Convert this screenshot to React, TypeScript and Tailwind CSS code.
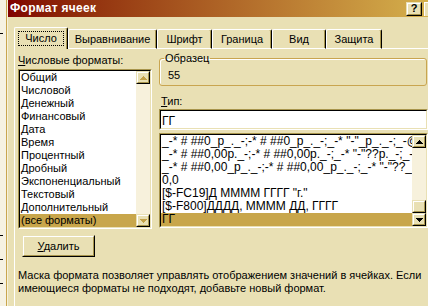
import React from "react";

const leftItems = [
  "Общий",
  "Числовой",
  "Денежный",
  "Финансовый",
  "Дата",
  "Время",
  "Процентный",
  "Дробный",
  "Экспоненциальный",
  "Текстовый",
  "Дополнительный",
  "(все форматы)",
];

const typeItems = [
  '_-* # ##0_р_._-;-* # ##0_р_._-;_-* "-"_р_._-;_-@_-',
  '_-* # ##0,00р._-;-* # ##0,00р._-;_-* "-"??р._-;_-@_-',
  '_-* # ##0,00_р_._-;-* # ##0,00_р_._-;_-* "-"??_р_._-;_-@_-',
  "0,0",
  '[$-FC19]Д ММММ ГГГГ "г."',
  "[$-F800]ДДДД, ММММ ДД, ГГГГ",
  "ГГ",
];

function Raised({ className = "", children }: { className?: string; children?: React.ReactNode }) {
  return (
    <div className={`border border-t-[#e9e0b4] border-l-[#e9e0b4] border-r-black border-b-black ${className}`}>
      <div className="w-full h-full border border-t-white border-l-white border-r-[#a8954c] border-b-[#a8954c] bg-[#e9e0b4] flex items-center justify-center">
        {children}
      </div>
    </div>
  );
}

function Sunken({ className = "", children }: { className?: string; children?: React.ReactNode }) {
  return (
    <div className={`border border-t-[#a8954c] border-l-[#a8954c] border-r-white border-b-white ${className}`}>
      <div className="w-full h-full border border-t-black border-l-black border-r-[#e9e0b4] border-b-[#e9e0b4] bg-white overflow-hidden">
        {children}
      </div>
    </div>
  );
}

function Arrow({ up, color }: { up?: boolean; color: string }) {
  const rows = up ? [0, 1, 2, 3] : [3, 2, 1, 0];
  return (
    <svg width="7" height="4" viewBox="0 0 7 4" shapeRendering="crispEdges">
      {rows.map((r, i) => (
        <rect key={i} x={3 - r} y={i} width={r * 2 + 1} height={1} fill={color} />
      ))}
    </svg>
  );
}

function Tab({ label, w, selected }: { label: string; w: string; selected?: boolean }) {
  if (selected) {
    return (
      <div
        className={`${w} h-[22px] shrink-0 border-l border-t border-white border-r border-r-black rounded-tl-[2px] rounded-tr-[2px] shadow-[inset_-1px_0_0_#a8954c] flex items-center justify-center bg-[#e9e0b4]`}
      >
        <span className="border border-dotted border-black px-[6px] leading-[13px]">{label}</span>
      </div>
    );
  }
  return (
    <div
      className={`${w} h-[20px] shrink-0 border-l border-t border-b border-white border-r border-r-black rounded-tl-[2px] rounded-tr-[2px] shadow-[inset_-1px_0_0_#a8954c] flex items-center justify-center`}
    >
      {label}
    </div>
  );
}

export default function App() {
  return (
    <div className="w-[428px] h-[306px] overflow-hidden flex font-['Liberation_Sans',Arial,sans-serif] text-[11px] leading-[13px] text-black bg-[#e9e0b4]">
      {/* background sheet strip */}
      <div className="relative w-[6px] shrink-0 bg-[#f6f2e2]">
        <div className="absolute left-0 top-[33px] w-[3px] h-px bg-black" />
        <div className="absolute left-0 top-[235px] w-[3px] h-px bg-black" />
        <div className="absolute left-0 top-[259px] w-[3px] h-px bg-black" />
        <div className="absolute left-0 top-[283px] w-[3px] h-px bg-black" />
      </div>
      <div className="w-px shrink-0 bg-[#c9a64e]" />
      <div className="flex-1 min-w-0 flex flex-col border-l border-[#f7f2dc] bg-[#e9e0b4]">
        {/* title bar */}
        <div className="h-[17px] shrink-0 flex items-center bg-gradient-to-r from-[#800000] to-[#d4b04c] pl-[2px]">
          <span className="text-white font-bold text-[12px] leading-[17px] tracking-[0.3px] whitespace-nowrap">Формат ячеек</span>
          <div className="flex-1" />
          <Raised className="w-[16px] h-[14px]">
            <span className="font-bold text-[11px] leading-[11px]">?</span>
          </Raised>
          <div className="ml-[2px] w-[4px] h-[14px] border-l border-t border-white bg-[#e9e0b4]" />
        </div>

        {/* tabs */}
        <div className="h-[32px] shrink-0 flex items-end pl-[6px]">
          <Tab label="Число" w="w-[54px]" selected />
          <Tab label="Выравнивание" w="w-[89px]" />
          <Tab label="Шрифт" w="w-[55px]" />
          <Tab label="Граница" w="w-[60px]" />
          <Tab label="Вид" w="w-[54px]" />
          <Tab label="Защита" w="w-[56px]" />
          <div className="flex-1 h-px bg-white" />
        </div>

        {/* panel */}
        <div className="ml-[6px] flex-1 border-l border-white pl-[3px] pt-[3px] flex flex-col">
          <div className="flex gap-[7px]">
            {/* left column */}
            <div className="w-[134px] shrink-0 pt-[2px] flex flex-col">
              <div className="whitespace-nowrap">
                <span className="underline">Ч</span>исловые форматы:
              </div>
              <Sunken className="mt-[2px] w-[134px] h-[160px]">
                <div className="flex h-full">
                  <div className="flex-1 min-w-0">
                    {leftItems.map((t, i) => (
                      <div
                        key={t}
                        className={`h-[13px] pl-[1px] whitespace-nowrap ${i === leftItems.length - 1 ? "bg-[#c8a64b]" : ""}`}
                      >
                        {t}
                      </div>
                    ))}
                  </div>
                  <div className="w-[14px] shrink-0 flex flex-col bg-[#f7f1dc]">
                    <Raised className="h-[13px]">
                      <Arrow up color="#c4a24a" />
                    </Raised>
                    <div className="flex-1" />
                    <Raised className="h-[13px]">
                      <Arrow color="#c4a24a" />
                    </Raised>
                  </div>
                </div>
              </Sunken>
              <Raised className="ml-[4px] mt-[6px] w-[73px] h-[22px]">
                <span>
                  <span className="underline">У</span>далить
                </span>
              </Raised>
            </div>

            {/* right column */}
            <div className="flex-1 min-w-0 flex flex-col">
              <fieldset className="mr-px border border-[#c9a550] rounded-[3px] shadow-[inset_1px_1px_0_#fff] pl-[4px] pb-[3px]">
                <legend className="px-[1px] leading-[13px]">Образец</legend>
                <div className="pl-[4px] pt-[4px]">55</div>
              </fieldset>
              <div className="mt-[9px] pl-[2px]">
                <span className="underline">Т</span>ип:
              </div>
              <Sunken className="mt-px h-[21px]">
                <div className="pl-[1px] pt-[4px] text-[12px] leading-[13px] whitespace-nowrap">ГГ</div>
              </Sunken>
              <Sunken className="mt-[3px] h-[95px]">
                <div className="flex h-full">
                  <div className="flex-1 min-w-0 overflow-hidden text-[12px] leading-[13px]">
                    {typeItems.map((t, i) => (
                      <div
                        key={t}
                        className={`h-[13px] pl-[1px] whitespace-nowrap overflow-hidden ${i === typeItems.length - 1 ? "bg-[#c8a64b]" : ""}`}
                      >
                        {t}
                      </div>
                    ))}
                  </div>
                  <div className="w-[14px] shrink-0 flex flex-col bg-[#f7f1dc]">
                    <Raised className="h-[13px]">
                      <Arrow up color="#000" />
                    </Raised>
                    <div className="flex-1" />
                    <Raised className="h-[13px]" />
                    <Raised className="h-[13px]">
                      <Arrow color="#000" />
                    </Raised>
                  </div>
                </div>
              </Sunken>
            </div>
          </div>

          <div className="mt-[12px] whitespace-nowrap">
            <div>Маска формата позволяет управлять отображением значений в ячейках. Если</div>
            <div>имеющиеся форматы не подходят, добавьте новый формат.</div>
          </div>
        </div>
      </div>
    </div>
  );
}
